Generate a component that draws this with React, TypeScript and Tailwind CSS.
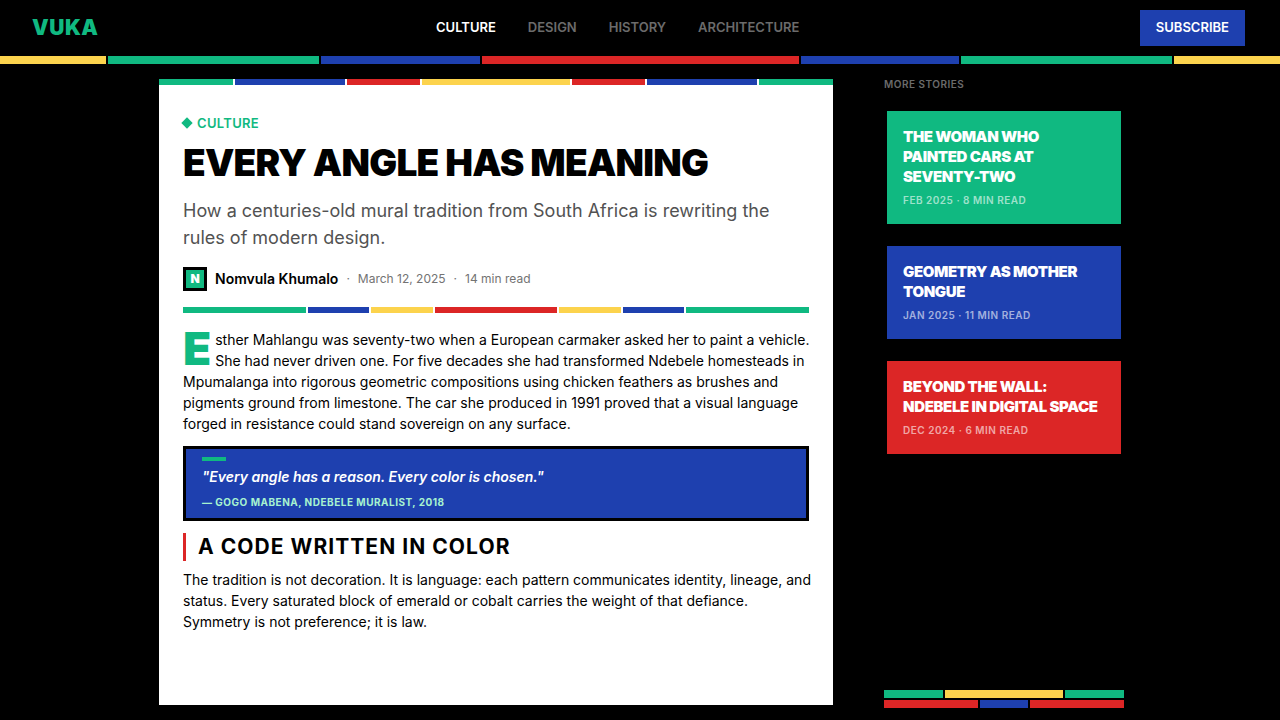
import clsx from "clsx";

interface Segment {
    grow: string;
    color: string;
}

interface Story {
    title: string;
    meta: string;
    bg: string;
}

const navLinks = ["Culture", "Design", "History", "Architecture"];

const headerBand: Segment[] = [
    { grow: "grow-[2]", color: "bg-[#fcd34d]" },
    { grow: "grow-[4]", color: "bg-[#10b981]" },
    { grow: "grow-[3]", color: "bg-[#1e40af]" },
    { grow: "grow-[6]", color: "bg-[#dc2626]" },
    { grow: "grow-[3]", color: "bg-[#1e40af]" },
    { grow: "grow-[4]", color: "bg-[#10b981]" },
    { grow: "grow-[2]", color: "bg-[#fcd34d]" },
];

const articleBand: Segment[] = [
    { grow: "grow-[2]", color: "bg-[#10b981]" },
    { grow: "grow-[3]", color: "bg-[#1e40af]" },
    { grow: "grow-[2]", color: "bg-[#dc2626]" },
    { grow: "grow-[4]", color: "bg-[#fcd34d]" },
    { grow: "grow-[2]", color: "bg-[#dc2626]" },
    { grow: "grow-[3]", color: "bg-[#1e40af]" },
    { grow: "grow-[2]", color: "bg-[#10b981]" },
];

const dividerBand: Segment[] = [
    { grow: "grow-[2]", color: "bg-[#10b981]" },
    { grow: "grow-[1]", color: "bg-[#1e40af]" },
    { grow: "grow-[1]", color: "bg-[#fcd34d]" },
    { grow: "grow-[2]", color: "bg-[#dc2626]" },
    { grow: "grow-[1]", color: "bg-[#fcd34d]" },
    { grow: "grow-[1]", color: "bg-[#1e40af]" },
    { grow: "grow-[2]", color: "bg-[#10b981]" },
];

const footerBandTop: Segment[] = [
    { grow: "grow-[1]", color: "bg-[#10b981]" },
    { grow: "grow-[2]", color: "bg-[#fcd34d]" },
    { grow: "grow-[1]", color: "bg-[#10b981]" },
];

const footerBandBottom: Segment[] = [
    { grow: "grow-[2]", color: "bg-[#dc2626]" },
    { grow: "grow-[1]", color: "bg-[#1e40af]" },
    { grow: "grow-[2]", color: "bg-[#dc2626]" },
];

const stories: Story[] = [
    { title: "The Woman Who Painted Cars at Seventy-Two", meta: "Feb 2025 · 8 min read", bg: "bg-[#10b981]" },
    { title: "Geometry as Mother Tongue", meta: "Jan 2025 · 11 min read", bg: "bg-[#1e40af]" },
    { title: "Beyond the Wall: Ndebele in Digital Space", meta: "Dec 2024 · 6 min read", bg: "bg-[#dc2626]" },
];

function Band({ segments, className }: { segments: Segment[]; className: string }) {
    return (
        <div className={clsx("flex shrink-0 gap-0.5", className)} aria-hidden="true">
            {segments.map((s, i) => (
                <div key={i} className={clsx("basis-0", s.grow, s.color)} />
            ))}
        </div>
    );
}

function Header() {
    return (
        <header>
            <div className="flex h-14 items-center justify-between px-8">
                <a href="#" className="text-[21px] leading-7 font-black uppercase tracking-wide text-[#10b981]">
                    Vuka
                </a>
                <nav className="flex gap-8">
                    {navLinks.map((link, i) => (
                        <a
                            key={link}
                            href="#"
                            className={clsx(
                                "text-[13px] font-semibold uppercase",
                                i === 0 ? "text-white" : "text-[#6b6b6b]"
                            )}
                        >
                            {link}
                        </a>
                    ))}
                </nav>
                <button className="h-[42px] border-3 border-black bg-[#1e40af] bg-clip-padding px-4 text-[13px] font-semibold uppercase text-white">
                    Subscribe
                </button>
            </div>
            <Band segments={headerBand} className="h-2" />
        </header>
    );
}

function Article() {
    return (
        <article className="flex min-w-0 max-w-[680px] flex-1 flex-col border-3 border-black bg-white">
            <Band segments={articleBand} className="h-1.5" />
            <div className="px-6 pt-7 pb-6">
                <p className="flex items-center gap-1.5 text-[13px] leading-5 font-semibold uppercase tracking-wide text-[#10b981]">
                    <span className="size-2 rotate-45 bg-[#10b981]" />
                    Culture
                </p>
                <h1 className="mt-2 text-[37px] leading-11 font-black uppercase tracking-[-0.02em]">
                    Every Angle Has Meaning
                </h1>
                <p className="mt-3 text-lg leading-[27px] text-[#525252]">
                    How a centuries-old mural tradition from South Africa is rewriting the rules of modern design.
                </p>

                <div className="mt-4 flex items-center gap-2 text-xs text-[#737373]">
                    <span className="flex size-6 items-center justify-center border-3 border-black bg-[#10b981] font-black text-white">
                        N
                    </span>
                    <span className="text-sm font-semibold text-black">Nomvula Khumalo</span>
                    <span>·</span>
                    <time dateTime="2025-03-12">March 12, 2025</time>
                    <span>·</span>
                    <span>14 min read</span>
                </div>

                <Band segments={dividerBand} className="mt-4 h-1.5" />

                <p className="mt-4 -mr-2 text-sm leading-[21px]">
                    <span className="float-left pr-1 text-[46px] leading-[38px] font-black text-[#10b981]">E</span>
                    sther Mahlangu was seventy-two when a European carmaker asked her to paint a vehicle. She had never
                    driven one. For five decades she had transformed Ndebele homesteads in Mpumalanga into rigorous
                    geometric compositions using chicken feathers as brushes and pigments ground from limestone. The car
                    she produced in 1991 proved that a visual language forged in resistance could stand sovereign on any
                    surface.
                </p>

                <blockquote className="mt-3 border-3 border-black bg-[#1e40af] px-4 py-2">
                    <div className="h-1 w-6 bg-[#10b981]" />
                    <p className="mt-1.5 text-sm leading-5 font-semibold italic text-white">
                        "Every angle has a reason. Every color is chosen."
                    </p>
                    <cite className="mt-2 block text-[10px] leading-[15px] font-bold not-italic uppercase tracking-wider text-[#a7f3d0]">
                        — Gogo Mabena, Ndebele Muralist, 2018
                    </cite>
                </blockquote>

                <h2 className="mt-3 border-l-3 border-[#dc2626] pl-3 text-[21px] leading-7 font-bold uppercase tracking-wider">
                    A Code Written in Color
                </h2>
                <p className="mt-2 -mr-2 text-sm leading-[21px]">
                    The tradition is not decoration. It is language: each pattern communicates identity, lineage, and
                    status. Every saturated block of emerald or cobalt carries the weight of that defiance. Symmetry is
                    not preference; it is law.
                </p>
            </div>
        </article>
    );
}

function Sidebar() {
    return (
        <aside className="flex w-60 shrink-0 flex-col">
            <h2 className="text-[10px] leading-4 font-semibold uppercase tracking-wider text-[#6b6b6b]">More Stories</h2>
            <div className="mt-4 flex flex-col gap-4">
                {stories.map((story) => (
                    <a key={story.title} href="#" className={clsx("block border-3 border-black bg-clip-padding p-4", story.bg)}>
                        <h3 className="text-[15px] leading-5 font-black uppercase tracking-tight text-white">
                            {story.title}
                        </h3>
                        <p className="mt-[5px] text-[10px] leading-4 font-semibold uppercase tracking-wider text-white/60">
                            {story.meta}
                        </p>
                    </a>
                ))}
            </div>
            <div className="mt-auto flex flex-col gap-0.5">
                <Band segments={footerBandTop} className="h-2" />
                <Band segments={footerBandBottom} className="h-2" />
            </div>
        </aside>
    );
}

export default function App() {
    return (
        <div className="flex min-h-screen flex-col bg-black font-['Inter',sans-serif] text-black">
            <Header />
            <main className="flex flex-1 justify-center gap-12 py-3">
                <Article />
                <Sidebar />
            </main>
        </div>
    );
}
